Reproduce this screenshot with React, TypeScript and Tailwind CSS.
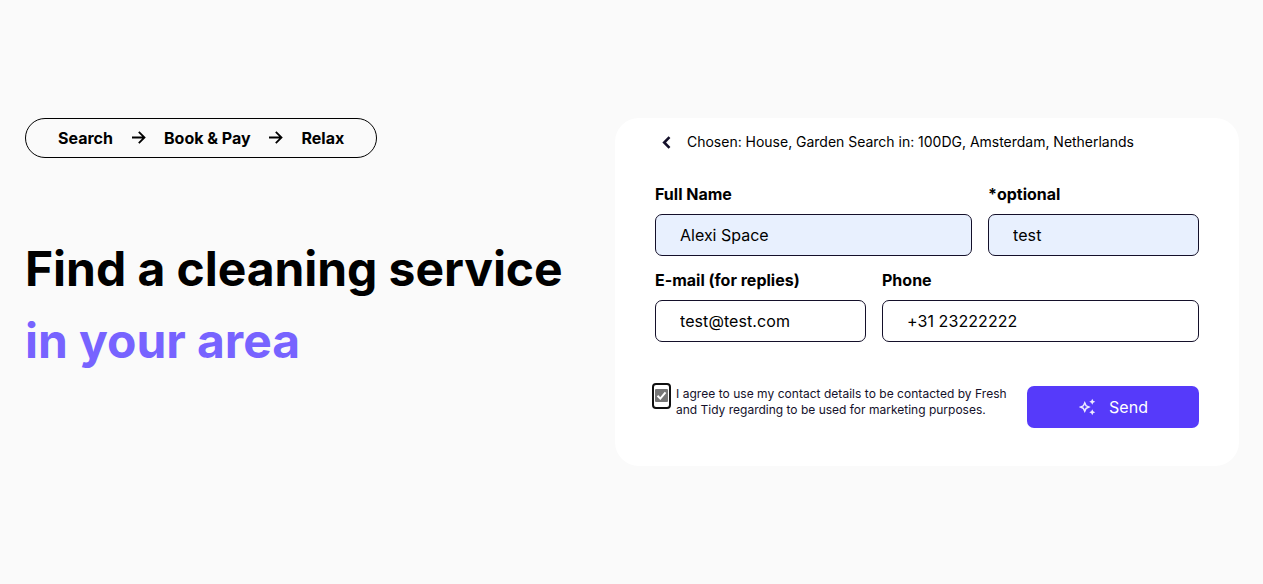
import { MdOutlineAutoAwesome } from "react-icons/md";

function Arrow() {
  return (
    <svg className="-mt-px" width="14" height="13" viewBox="0 0 14 13" fill="none" stroke="#000" strokeWidth="1.8">
      <path d="M0 6.5h12.6M6.8 0.8l5.7 5.7-5.7 5.7" />
    </svg>
  );
}

type FieldProps = { label: string; value: string; width: string; filled?: boolean; tracking?: string };

function Field({ label, value, width, filled, tracking = "" }: FieldProps) {
  return (
    <label className={`flex flex-col ${width}`}>
      <span className="h-6 text-[16px] leading-6 font-bold whitespace-nowrap">{label}</span>
      <input
        defaultValue={value}
        className={`mt-2 h-[42px] w-full rounded-[7px] border border-[#14102a] px-6 text-[16px] outline-none ${tracking} ${filled ? "bg-[#e8f0fe]" : "bg-white"}`}
      />
    </label>
  );
}

export default function App() {
  return (
    <main className="flex h-[584px] w-[1263px] items-start justify-between overflow-hidden bg-[#fafafa] pt-[118px] pr-6 pl-[25px] font-['Inter',sans-serif] text-black">
      <section className="flex flex-col items-start">
        <div className="flex h-10 w-[352px] items-center rounded-full border border-black pl-8 text-[16px] font-bold whitespace-nowrap">
          <span className="w-[74px]">Search</span>
          <span className="w-8"><Arrow /></span>
          <span className="w-[105px]">Book &amp; Pay</span>
          <span className="w-[32.5px]"><Arrow /></span>
          <span>Relax</span>
        </div>
        <h1 className="mt-[75px] text-[48px] leading-[72px] font-bold tracking-[-0.06px] whitespace-nowrap">
          Find a cleaning service
          <br />
          <span className="text-[#7763ff]">in your area</span>
        </h1>
      </section>

      <form className="flex h-[347.6px] w-[624px] flex-col rounded-[24px] bg-white px-10">
        <div className="flex h-12 items-center">
          <svg className="ml-[7px]" width="9" height="13" viewBox="0 0 9 13" fill="none" stroke="#14102a" strokeWidth="2.6">
            <path d="M7.5 1.2L2.2 6.5l5.3 5.3" />
          </svg>
          <p className="-mt-0.5 ml-4 text-[14px] tracking-[-0.015px] whitespace-nowrap">Chosen: House, Garden Search in: 100DG, Amsterdam, Netherlands</p>
        </div>
        <div className="mt-4 flex gap-4">
          <Field label="Full Name" value="Alexi Space" width="w-[317px]" filled />
          <Field label="*optional" value="test" width="w-[211px]" filled tracking="tracking-[0.1px]" />
        </div>
        <div className="mt-3 flex gap-4">
          <Field label="E-mail (for replies)" value="test@test.com" width="w-[211px]" tracking="tracking-[0.08px]" />
          <Field label="Phone" value="+31 23222222" width="w-[317px]" tracking="tracking-[0.08px]" />
        </div>
        <div className="mt-[41px] flex items-start justify-between">
          <div className="flex items-start">
            <div className="-ml-[3px] flex h-[26px] w-[19px] items-start justify-center rounded-[4px] border-2 border-[#101010] bg-white pt-1">
              <svg className="shrink-0" width="13" height="13" viewBox="0 0 13 13">
                <rect width="13" height="13" rx="1" fill="#767676" />
                <path d="M2.5 6.8l2.8 2.8 5.2-6.2" fill="none" stroke="#fff" strokeWidth="2" />
              </svg>
            </div>
            <p className="mt-[3px] ml-[5px] text-[12px] leading-4 whitespace-nowrap text-[#14102a]">
              <span className="tracking-[0.035px]">I agree to use my contact details to be contacted by Fresh</span>
              <br />
              and Tidy regarding to be used for marketing purposes.
            </p>
          </div>
          <button type="button" className="mt-[3px] flex h-[42px] w-[172px] items-center justify-center gap-[13px] rounded-[7px] bg-[#563afa] text-[16px] text-white">
            <MdOutlineAutoAwesome size={18} className="opacity-90" />
            Send
          </button>
        </div>
      </form>
    </main>
  );
}
